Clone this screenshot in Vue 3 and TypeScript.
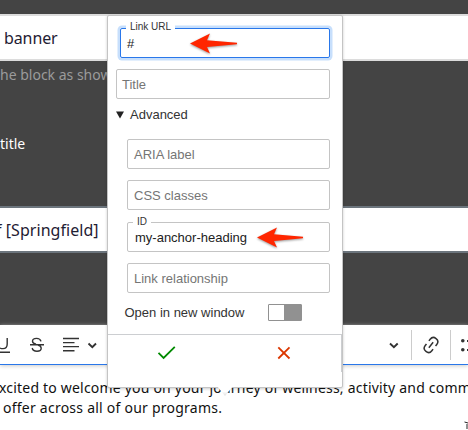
<script setup lang="ts">
import { ref } from 'vue'

interface Field {
  key: string
  label: string
  value: string
}

const linkUrl = ref('#')
const advanced: Field[] = [
  { key: 'aria', label: 'ARIA label', value: '' },
  { key: 'css', label: 'CSS classes', value: '' },
  { key: 'id', label: 'ID', value: 'my-anchor-heading' },
  { key: 'rel', label: 'Link relationship', value: '' },
]
const open = ref(true)
</script>

<template>
  <main class="page">
    <div class="input light"><span class="banner">banner</span></div>
    <section class="notes">
      <p class="help">he block as shown</p>
      <p class="label">title</p>
    </section>
    <div class="input slate"><span class="place">f [Springfield]</span></div>
    <div class="space"></div>

    <div class="toolbar">
      <svg class="tools" viewBox="0 0 468 39" fill="none" stroke="#333" stroke-width="1.4">
        <path d="M0 23Q1 23.6 3 23.6Q7.2 23.6 7.2 19V13M0 27.3H10" />
        <path d="M41 16.4Q40.2 13.4 36.5 13.4Q32.5 13.4 32.5 16.3Q32.5 18.4 36 19.3M30 19.7H44M38 20Q41.2 21 41.2 23.3Q41.2 26.2 37 26.2Q32.8 26.2 32.2 23" />
        <path d="M63 13.5H79M63 17.6H74.5M63 21.6H79M63 25.8H74.5" />
        <path d="M88.5 18.5L92.3 22.2L96 18.5M390 18.5L393.9 22.2L397.7 18.5" stroke-width="1.9" />
        <path d="M411.5 5V35M450.5 5V35" stroke="#ccc" stroke-width="1" />
        <g transform="rotate(-52 431 20)" stroke-width="1.5">
          <path d="M429 15.8H427Q422.8 15.8 422.8 20T427 24.2H429M433 15.8H435Q439.2 15.8 439.2 20T435 24.2H433M427.5 20H434.5" />
        </g>
        <g fill="#333" stroke="none">
          <circle cx="462.8" cy="15.7" r="1.8" /><circle cx="462.8" cy="24.8" r="1.8" />
          <path d="M467 15H468V17H467ZM467 24H468V26H467Z" />
        </g>
      </svg>
    </div>

    <article class="editor">
      <p class="line first">xcited to welcome you on your journey of wellness, activity and comm</p>
      <p class="line second">offer across all of our programs.</p>
      <svg class="cursor" viewBox="0 0 4 8"><path d="M.5 1L4 2M3 3V8" fill="none" stroke="#222" /></svg>
    </article>

    <form class="popover" @submit.prevent>
      <div class="body">
        <div class="field url focus">
          <span class="legend">Link URL</span>
          <span class="value">{{ linkUrl }}</span>
          <svg class="pointer" viewBox="0 0 52 24"><path d="M1 11.5L21 1.5L18 8.2L48 10.8V12.2L18 15L21 21.5Z" /></svg>
        </div>
        <div class="field title"><span class="placeholder">Title</span></div>
        <div class="summary" @click="open = !open">
          <svg viewBox="0 0 8 8"><path d="M0 .4H8L4 7.6Z" fill="#222" /></svg>
          <span>Advanced</span>
        </div>
        <div v-if="open" class="advanced">
          <div v-for="f in advanced" :key="f.key" class="field" :class="f.key">
            <template v-if="f.value">
              <span class="legend">{{ f.label }}</span>
              <span class="value">{{ f.value }}</span>
              <svg class="pointer" viewBox="0 0 52 24"><path d="M1 11.5L21 1.5L18 8.2L47 10.8V12.2L18 15L21 21.5Z" /></svg>
            </template>
            <span v-else class="placeholder">{{ f.label }}</span>
          </div>
        </div>
        <div class="window">
          <span>Open in new window</span>
          <span class="switch"><i></i></span>
        </div>
      </div>
      <div class="actions">
        <button class="save" type="button" aria-label="Save">
          <svg viewBox="0 0 20 16"><path d="M1.5 7.8L6.6 13L17.8 1.8" /></svg>
        </button>
        <button class="cancel" type="button" aria-label="Cancel">
          <svg viewBox="0 0 14 14"><path d="M1.3 1.3L12.5 12.5M12.5 1.3L1.3 12.5" /></svg>
        </button>
      </div>
      <span class="tip"></span>
    </form>
  </main>
</template>

<style>
body {
  margin: 0;
  overflow: hidden;
}
</style>

<style scoped>
.page {
  position: relative;
  box-sizing: border-box;
  width: 468px;
  height: 430px;
  padding-top: 14px;
  overflow: hidden;
  background: #444;
  font-family: "Noto Sans", sans-serif;
}
p {
  margin: 0;
  white-space: nowrap;
}
.input {
  box-sizing: border-box;
  height: 47px;
  border: solid #dcdcdc;
  border-width: 2px 0;
  background: #fff;
  color: #1f2033;
  font-size: 16px;
  line-height: 44px;
  white-space: nowrap;
}
.slate {
  border-color: #6c757d;
}
.banner {
  margin-left: 4px;
  letter-spacing: -0.1px;
}
.place {
  margin-left: -4px;
  letter-spacing: 0.05px;
}
.notes {
  height: 145px;
}
.help {
  padding-top: 4px;
  color: #9b9b9b;
  font-size: 14px;
  line-height: 20px;
}
.label {
  padding-top: 49px;
  color: #fff;
  font-size: 14px;
  line-height: 20px;
}
.space {
  height: 72px;
}
.toolbar {
  position: relative;
  z-index: 1;
  box-sizing: border-box;
  height: 40px;
  border-bottom: 1px solid #2977ea;
  background: #fff;
  box-shadow: 0 1px 4px #ccc;
}
.tools {
  display: block;
  width: 468px;
  height: 39px;
}
.editor {
  position: relative;
  height: 65px;
  padding-top: 13px;
  background: #fff;
  color: #111;
  font-size: 14px;
  line-height: 20px;
}
.first {
  margin-left: -1px;
  letter-spacing: 0.2px;
}
.second {
  padding-left: 3px;
  letter-spacing: 0.24px;
}
.cursor {
  position: absolute;
  top: 56px;
  left: 464px;
  width: 4px;
  height: 8px;
}
.popover {
  position: absolute;
  z-index: 2;
  top: 15px;
  left: 107px;
  box-sizing: border-box;
  width: 236px;
  height: 373px;
  border: 1px solid #c4c4c4;
  border-radius: 2px;
  background: #fff;
  box-shadow: 0 1px 3px rgba(0, 0, 0, 0.2);
  color: #333;
  font-family: "Liberation Sans", sans-serif;
  font-size: 13px;
}
.body {
  box-sizing: border-box;
  height: 318px;
  padding: 12px 12px 0 8px;
}
.field {
  position: relative;
  box-sizing: border-box;
  display: flex;
  align-items: center;
  height: 30px;
  padding-left: 6px;
  border: 1px solid #c4c4c4;
  border-radius: 2px;
  white-space: nowrap;
}
.placeholder {
  color: #757575;
  padding-top: 1px;
}
.url {
  margin-left: 4px;
  border-color: #2977ea;
  box-shadow: 0 0 0 2.5px #c7dffc;
}
.legend {
  position: absolute;
  top: -7px;
  left: 5px;
  padding: 0 4px;
  background: #fff;
  font-size: 10px;
  line-height: 12px;
}
.url .legend {
  top: -8px;
}
.value {
  color: #222;
}
.pointer {
  position: absolute;
  top: 3px;
  left: 68px;
  width: 52px;
  height: 24px;
  fill: #ff2600;
  filter: drop-shadow(0 1px 1px rgba(0, 0, 0, 0.4));
}
.id .pointer {
  top: 3px;
  left: 128px;
}
.title {
  margin-top: 11px;
  padding-left: 5px;
}
.summary {
  display: flex;
  align-items: center;
  height: 31px;
  gap: 6px;
}
.summary svg {
  width: 8px;
  height: 8px;
}
.advanced {
  display: grid;
  gap: 11px;
  padding: 9px 0 0 11px;
}
.id {
  margin-top: 1px;
  padding-left: 7px;
}
.window {
  display: flex;
  align-items: center;
  justify-content: space-between;
  height: 38px;
  padding: 0 28px 0 8.5px;
}
.switch {
  box-sizing: border-box;
  width: 34px;
  height: 17px;
  border: 1px solid #919191;
  border-radius: 1px;
  background: #919191;
}
.switch i {
  display: block;
  width: 15px;
  height: 15px;
  background: #fff;
}
.actions {
  display: grid;
  grid-template-columns: 1fr 1fr;
  height: 38px;
}
.actions button {
  display: flex;
  align-items: center;
  justify-content: center;
  padding: 0 0 1px;
  border: 0;
  border-top: 1px solid #ccced1;
  background: transparent;
}
.actions .cancel {
  padding-left: 2px;
  border-right: 1px solid #ccced1;
}
.actions svg {
  fill: none;
  stroke-width: 1.8;
}
.save svg {
  width: 20px;
  height: 16px;
  stroke: #008a00;
}
.cancel svg {
  width: 14px;
  height: 14px;
  stroke: #db3700;
}
.tip {
  position: absolute;
  bottom: -9px;
  left: 109px;
  width: 16px;
  height: 10px;
  background: linear-gradient(#fff 55%, #ddd);
  clip-path: polygon(0 0, 100% 0, 50% 100%);
}
</style>
